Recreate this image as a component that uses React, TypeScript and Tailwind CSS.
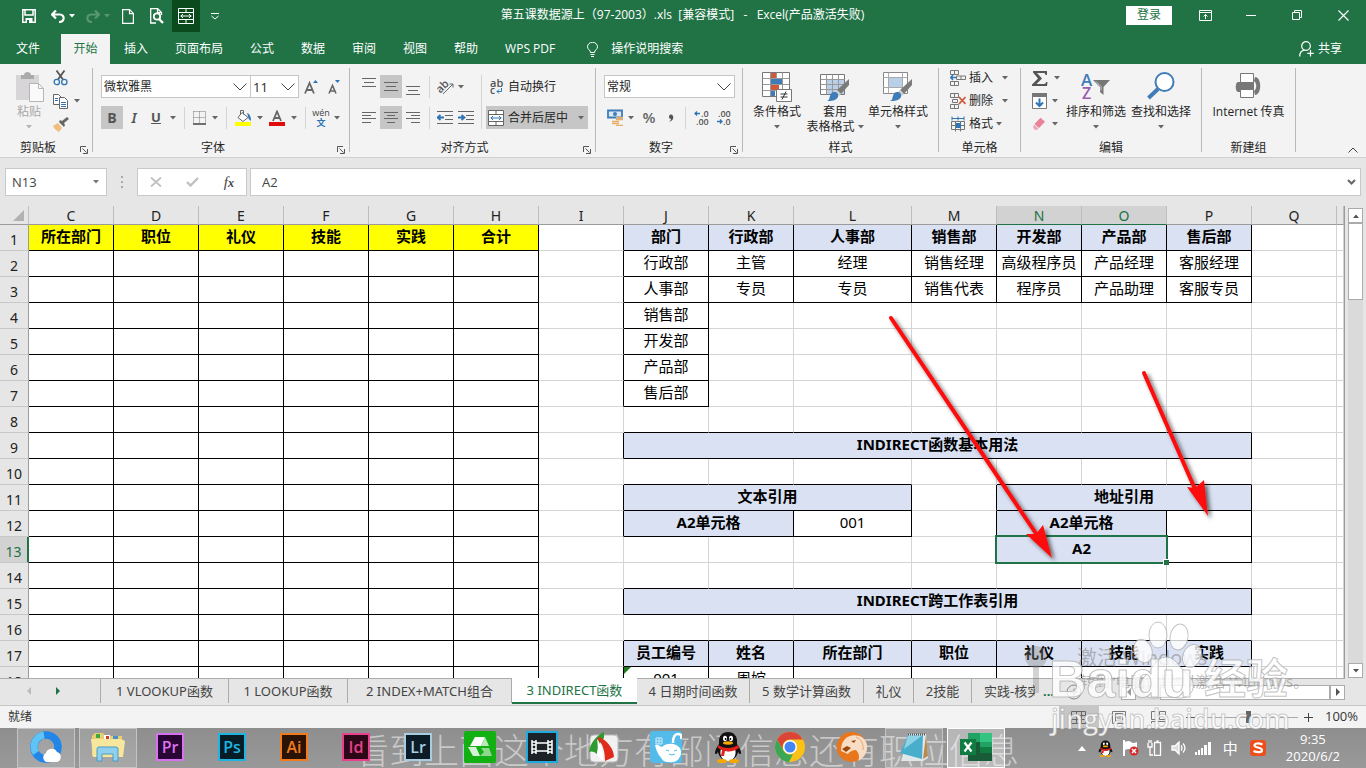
import React, { useState } from 'react';
import clsx from 'clsx';

const UI_FONT = "font-['Open_Sans','Noto_Sans_CJK_SC',sans-serif]";
const GRID_FONT = "font-['Noto_Sans','Noto_Sans_CJK_SC',sans-serif]";

/* ---------- small shared pieces ---------- */

const Caret = ({ className = 'text-[#666]' }: { className?: string }) => (
  <svg width="6" height="4" viewBox="0 0 6 4" className={clsx('shrink-0', className)} aria-hidden="true">
    <path d="M0 0h6L3 3.5z" fill="currentColor" />
  </svg>
);

const Chevron = () => (
  <svg width="14" height="8" viewBox="0 0 14 8" className="pointer-events-none absolute right-1 top-2" fill="none" stroke="#444" aria-hidden="true">
    <path d="M.5.5L7 7 13.5.5" />
  </svg>
);

const Divider = () => <span className="mx-[5px] h-[22px] w-px shrink-0 bg-[#d4d4d4]" />;

interface ToolProps {
  label: string;
  className?: string;
  active?: boolean;
  children: React.ReactNode;
}

function Tool({ label, className, active, children }: ToolProps) {
  return (
    <button
      aria-label={label}
      title={label}
      className={clsx('flex h-full shrink-0 items-center justify-center', active && 'bg-[#c6c6c6]', className)}
    >
      {children}
    </button>
  );
}

interface GroupProps {
  label: string;
  launcher?: boolean;
  className: string;
  children: React.ReactNode;
}

function Group({ label, launcher, className, children }: GroupProps) {
  return (
    <section className={clsx('flex shrink-0', className)} aria-label={label}>
      <div className="flex min-w-0 flex-1 flex-col">
        <div className="h-[72px]">{children}</div>
        <div className="flex h-[15px] items-center">
          <span className="flex-1 text-center leading-[15px]">{label}</span>
          {launcher && (
            <button className="flex w-4 justify-center pt-1" aria-label={`${label}设置`}>
              <svg width="8" height="8" viewBox="0 0 8 8" fill="none" stroke="#555">
                <path d="M.5 6V.5H6M2.5 2.5l4 4M7.5 3v4.5H3" />
              </svg>
            </button>
          )}
        </div>
      </div>
      <div className="h-[84px] w-px bg-[#b9b9b9]" />
    </section>
  );
}

interface BigToolProps {
  icon: React.ReactNode;
  lines: string[];
  className?: string;
  muted?: boolean;
  caret?: 'below' | 'inline' | 'none';
}

function BigTool({ icon, lines, className, muted, caret = 'below' }: BigToolProps) {
  return (
    <button className={clsx('flex shrink-0 flex-col items-center pt-1 leading-[15px]', muted && 'text-[#a8a8a8]', className)}>
      <span className="flex h-8 items-start">{icon}</span>
      {lines.map((line, i) => (
        <span key={line} className="flex items-center gap-[3px] whitespace-nowrap">
          {line}
          {caret === 'inline' && i === lines.length - 1 && <Caret />}
        </span>
      ))}
      {caret === 'below' && (
        <span className="flex h-[15px] items-center"><Caret className={muted ? 'text-[#b5b5b5]' : 'text-[#666]'} /></span>
      )}
    </button>
  );
}

/* ---------- icons ---------- */

const MergeIcon = ({ stroke, accent, fill = 'none' }: { stroke: string; accent: string; fill?: string }) => (
  <svg width="16" height="16" viewBox="0 0 16 16" fill={fill} stroke={stroke} aria-hidden="true">
    <path d="M.5.5h15v15H.5zM.5 4.500h15M.5 11.500h15M8 .5v4M8 11.500v4" />
    <path d="M2.500 8h11M5 6L3 8l2 2M11 6l2 2-2 2" stroke={accent} fill="none" />
  </svg>
);

const Lines = ({ rows }: { rows: [number, number, number][] }) => (
  <svg width="14" height="14" viewBox="0 0 14 14" stroke="#666" aria-hidden="true">
    {rows.map(([y, x1, x2]) => (
      <path key={y} d={`M${x1} ${y + 0.5}H${x2}`} />
    ))}
  </svg>
);

const IndentIcon = ({ right }: { right?: boolean }) => (
  <svg width="16" height="14" viewBox="0 0 16 14" fill="none" aria-hidden="true">
    <path d="M0 .5h16M8 4.500h8M8 8.500h8M0 12.500h16" stroke="#666" />
    <path d={right ? 'M0 6.500h6M3.500 4l3 2.500-3 2.500' : 'M1 6.500h6M3.500 4l-3 2.500 3 2.500'} stroke="#2f75b5" strokeWidth="1.800" />
  </svg>
);

const Brush = () => (
  <>
    <path d="M29 7v6l-8 9-4-4z" fill="#7b7b7b" />
    <path d="M17 18l4 4-2 2-4-4z" fill="#cfcfcf" />
    <path d="M14 20c3 0 5 2 4 5-2 4-7 4-11 4 3-1 2-3 3-5 1-3 2-4 4-4z" fill="#3f7cb8" />
  </>
);

const CondFormatIcon = () => (
  <svg width="30" height="30" viewBox="0 0 30 30" aria-hidden="true">
    <path d="M.5.5h27v24H.5z" fill="#fff" stroke="#777" />
    <path d="M8.500.5v24M14.500.5v24M20.500.5v24M.5 6.500h27M.5 12.500h27M.5 18.500h27" stroke="#999" />
    <path d="M9 1h5v5H9zM9 13h8v5H9z" fill="#d0593b" />
    <path d="M9 7h11v5H9zM9 19h4v5H9z" fill="#3f7cb8" />
    <path d="M14.500 17.500h15v12h-15z" fill="#fff" stroke="#777" />
    <path d="M18.500 22h7M18.500 25h7M24 19.500l-4 8" stroke="#333" fill="none" />
  </svg>
);

const TableFormatIcon = () => (
  <svg width="30" height="30" viewBox="0 0 30 30" aria-hidden="true">
    <path d="M.5 2.500h24v20H.5z" fill="#fff" stroke="#777" />
    <path d="M7 8h17v14H7z" fill="#b9cfe8" />
    <path d="M6.500 2.500v20M12.500 2.500v20M18.500 2.500v20M.5 7.500h24M.5 12.500h24M.5 17.500h24" stroke="#999" />
    <Brush />
  </svg>
);

const CellStyleIcon = () => (
  <svg width="30" height="30" viewBox="0 0 30 30" aria-hidden="true">
    <path d="M.5.5h24v21H.5z" fill="#fff" stroke="#888" />
    <path d="M5.500.5v21M19.500.5v21M.5 5.500h24M.5 15.500h24" stroke="#aaa" />
    <path d="M6 6h13v9H6z" fill="#b9cfe8" />
    <Brush />
  </svg>
);

const CellsIcon = ({ kind }: { kind: 'insert' | 'delete' | 'format' }) => (
  <svg width="16" height="16" viewBox="0 0 16 16" fill="none" stroke="#777" aria-hidden="true">
    {kind === 'format' ? (
      <>
        <path d="M1.500 5.500h13v8h-13zM5.500 5.500v10M10.500 5.500v10M1.500 9.500h13" />
        <path d="M6 7h5v5H6z" fill="#2f75b5" stroke="none" />
        <path d="M2 2.500h12M2 .5v4M14 .5v4M8 .5v4" stroke="#2f75b5" />
      </>
    ) : (
      <>
        <path d="M.5.5h8v4h-8zM4.500.5v4M.5 11.500h8v4h-8zM4.500 11.500v4" />
        {kind === 'insert' ? (
          <>
            <path d="M6.500 6h9v3.500h-9zM11 6v3.500" />
            <path d="M6 7.500H.8M3 5L.8 7.500 3 10" stroke="#2f75b5" strokeWidth="1.500" />
          </>
        ) : (
          <>
            <path d="M2.500 6.500h5v3h-5z" />
            <path d="M9 4l6.500 7M15.500 4L9 11" stroke="#d0593b" strokeWidth="1.800" />
          </>
        )}
      </>
    )}
  </svg>
);

const Penguin = ({ size }: { size: number }) => (
  <svg width={size} height={size} viewBox="0 0 32 32" aria-hidden="true">
    <path d="M16 1c6 0 9 4 9 9v3c2 3 4 6 4 9 0 2-2 1-3-1-1 5-5 9-10 9S7 26 6 21c-1 2-3 3-3 1 0-3 2-6 4-9v-3c0-5 3-9 9-9z" fill="#111" />
    <path d="M9 18c4 3 10 3 14 0 2 5-1 12-7 12S7 23 9 18z" fill="#fff" />
    <ellipse cx="13" cy="7.500" rx="2" ry="2.800" fill="#fff" />
    <ellipse cx="19" cy="7.500" rx="2" ry="2.800" fill="#fff" />
    <circle cx="13.600" cy="8" r=".9" />
    <circle cx="18.400" cy="8" r=".9" />
    <ellipse cx="16" cy="12" rx="5" ry="1.700" fill="#f7a800" />
    <path d="M6 14c6 4 14 4 20 0l1 3c-4 3-9 4-14 3l-1 5H9l1-6-4-2z" fill="#e3201b" />
    <ellipse cx="10" cy="30" rx="5" ry="2" fill="#f7a800" />
    <ellipse cx="22" cy="30" rx="5" ry="2" fill="#f7a800" />
  </svg>
);

/* ---------- title bar and tabs ---------- */

function TitleBar() {
  return (
    <header className="flex h-[34px] shrink-0 bg-[#217346] text-white">
      <div className="flex h-8 flex-1 basis-0 pl-[15px]">
        <Tool label="保存" className="w-7">
          <svg width="14" height="14" viewBox="0 0 14 14" fill="none" stroke="#fff" strokeWidth="1.500">
            <path d="M.8.8h12.400v12.400H.8zM3 1v5h8V1" />
            <path d="M3.500 9h7v5h-7z" fill="#fff" stroke="none" />
            <path d="M5 11h2v3H5z" fill="#217346" stroke="none" />
          </svg>
        </Tool>
        <Tool label="撤消" className="w-[35px] gap-1 pl-1">
          <svg width="14" height="13" viewBox="0 0 14 13" fill="none" stroke="#fff" strokeWidth="2.200">
            <path d="M1 4.500h8c5 0 5 7.500-1 7.500M5 .5l-4 4 4 4" />
          </svg>
          <Caret className="text-white" />
        </Tool>
        <Tool label="恢复" className="w-[35px] gap-1 pl-1 opacity-25">
          <svg width="14" height="13" viewBox="0 0 14 13" fill="none" stroke="#fff" strokeWidth="2.200">
            <path d="M13 4.500H5c-5 0-5 7.500 1 7.500M9 .5l4 4-4 4" />
          </svg>
          <Caret className="text-white" />
        </Tool>
        <Tool label="新建" className="w-[29px]">
          <svg width="12" height="15" viewBox="0 0 12 15" fill="none" stroke="#fff" strokeWidth="1.200">
            <path d="M.6.6h7l3.800 3.800v10H.6zM7.500.6v4h4" />
          </svg>
        </Tool>
        <Tool label="打印预览" className="w-[30px]">
          <svg width="14" height="16" viewBox="0 0 14 16" fill="none" stroke="#fff" strokeWidth="1.300">
            <path d="M6 15H.7V.7h7l3.800 3.800V7M7.500.7v4h4" />
            <circle cx="7" cy="8.500" r="3.200" strokeWidth="1.800" />
            <path d="M9 11l4 4" strokeWidth="2.400" />
          </svg>
        </Tool>
        <Tool label="合并后居中" className="w-7 bg-[#0a4a1d]">
          <MergeIcon stroke="#fff" accent="#fff" />
        </Tool>
        <Tool label="自定义快速访问工具栏" className="w-[30px]">
          <svg width="8" height="7" viewBox="0 0 8 7" fill="none" stroke="#fff">
            <path d="M0 .5h8M.5 3L4 6l3.500-3" />
          </svg>
        </Tool>
      </div>
      <h1 className="whitespace-pre pt-[7px] text-[12px] leading-4">
        {'第五课数据源上（97-2003）.xls  [兼容模式]   -   Excel(产品激活失败)'}
      </h1>
      <div className="flex h-[30px] flex-1 basis-0 items-center justify-end pl-4">
        <button className="mr-[10px] h-[19px] w-[46px] bg-white text-[12px] leading-[18px] text-[#217346]">登录</button>
        <Tool label="功能区显示选项" className="w-[46px]">
          <svg width="13" height="11" viewBox="0 0 13 11" fill="none" stroke="#fff">
            <path d="M.5.5h12v10H.5zM.5 2.500h12M6.500 9V4.500M4.500 6.500l2-2 2 2" />
          </svg>
        </Tool>
        <Tool label="最小化" className="w-[46px]">
          <svg width="10" height="1"><path d="M0 .5h10" stroke="#fff" /></svg>
        </Tool>
        <Tool label="向下还原" className="w-[46px]">
          <svg width="10" height="10" viewBox="0 0 10 10" fill="none" stroke="#fff">
            <path d="M.5 2.500h7v7h-7zM2.500 2.500v-2h7v7h-2" />
          </svg>
        </Tool>
        <Tool label="关闭" className="w-[46px]">
          <svg width="11" height="11" viewBox="0 0 11 11" stroke="#fff" strokeWidth="1.200"><path d="M.5.5l10 10M10.500.5l-10 10" /></svg>
        </Tool>
      </div>
    </header>
  );
}

const RIBBON_TABS = ['插入', '页面布局', '公式', '数据', '审阅', '视图', '帮助', 'WPS PDF'];

function RibbonTabs() {
  return (
    <nav className="flex h-[30px] shrink-0 gap-px bg-[#217346] text-[12px] text-white">
      <button className="w-[60px] pr-1">文件</button>
      <button className="w-[49px] bg-[#f3f3f3] text-[#217346]">开始</button>
      {RIBBON_TABS.map((tab) => (
        <button key={tab} className="whitespace-nowrap px-[13px]">{tab}</button>
      ))}
      <button className="flex items-center gap-[13px] pl-[18px]">
        <svg width="11" height="15" viewBox="0 0 11 15" fill="none" stroke="#fff">
          <path d="M3.500 10.500C3.500 8 .5 7.500.5 4.800a5 4.500 0 0110 0c0 2.700-3 3.200-3 5.700zM3.500 12.500h4M4 14.500h3" />
        </svg>
        操作说明搜索
      </button>
      <button className="ml-auto flex items-center gap-1 pr-6">
        <svg width="15" height="16" viewBox="0 0 15 16" fill="none" stroke="#fff" strokeWidth="1.200">
          <circle cx="7" cy="5" r="4.300" />
          <path d="M.7 15.500c0-3.500 2-6 5-6.300M11.500 9v6.500M8.300 12.300h6.500" />
        </svg>
        共享
      </button>
    </nav>
  );
}

/* ---------- ribbon ---------- */

function Ribbon() {
  return (
    <div className="relative flex h-[94px] shrink-0 border-b border-[#cfcfcf] bg-[#f3f3f3] pt-1 text-[12px] text-[#262626]">
      <Group label="剪贴板" launcher className="w-[93px]">
        <div className="flex pl-[13px]">
          <BigTool
            muted
            className="w-8"
            lines={['粘贴']}
            icon={
              <svg width="29" height="30" viewBox="0 0 29 30" aria-hidden="true">
                <path d="M1 3h23v25H1z" fill="#d8d5d8" />
                <path d="M6 3h3c0-4 7-4 7 0h3v4H6z" fill="#ababab" />
                <path d="M14.500 11.500h9l5 5v13h-14z" fill="#fafafa" stroke="#b5b5b5" />
                <path d="M23.500 11.500v5h5" fill="none" stroke="#b5b5b5" />
              </svg>
            }
          />
          <div className="ml-2 flex flex-col gap-[3px]">
            <button className="flex h-5 w-4 items-center" aria-label="剪切">
              <svg width="16" height="16" viewBox="0 0 16 16" fill="none">
                <path d="M3.500.5l6.500 9M11.500.5L5 9.500" stroke="#555" strokeWidth="1.800" />
                <circle cx="3.800" cy="12" r="2.700" stroke="#2f75b5" strokeWidth="1.300" />
                <circle cx="11.300" cy="12" r="2.700" stroke="#2f75b5" strokeWidth="1.300" />
              </svg>
            </button>
            <button className="flex h-5 items-center gap-[5px]" aria-label="复制">
              <svg width="16" height="15" viewBox="0 0 16 15" fill="#fff" stroke="#666">
                <path d="M.5.5h5l3 3v7h-8z" />
                <path d="M6.500 3.500h5l3 3v8h-8z" />
                <path d="M2 4.500h3M2 6.500h3M8 8.500h5M8 10.500h5M8 12.500h5" stroke="#2f75b5" />
              </svg>
              <Caret />
            </button>
            <button className="flex h-5 w-4 items-center" aria-label="格式刷">
              <svg width="16" height="15" viewBox="0 0 16 15">
                <path d="M0 9l5-3 4 5-3 4c-2-1-5-3-6-6z" fill="#efbe7d" />
                <path d="M6 5l5 5 1-2-1-2 5-4-2-2-5 4-2-1z" fill="#666" />
              </svg>
            </button>
          </div>
        </div>
      </Group>

      <Group label="字体" launcher className="w-[257px]">
        <div className="flex flex-col gap-2 pl-2 pt-[7px]">
          <div className="flex h-[23px]">
            <div className="relative">
              <select aria-label="字体" className="h-[23px] w-[150px] appearance-none border border-[#c6c6c6] bg-white pl-[2px] text-[12px] leading-[18px]">
                <option>微软雅黑</option>
              </select>
              <Chevron />
            </div>
            <div className="relative -ml-px">
              <select aria-label="字号" className="h-[23px] w-[49px] appearance-none border border-[#c6c6c6] bg-white pl-[2px] text-[13px] leading-[18px]">
                <option>11</option>
              </select>
              <Chevron />
            </div>
            <Tool label="增大字号" className="w-6">
              <svg width="15" height="16" viewBox="0 0 15 16" fill="none">
                <path d="M1 14.500L5.500 4 10 14.500M2.500 11h6" stroke="#666" strokeWidth="1.800" />
                <path d="M9 4l2.500-3L14 4z" fill="#2f75b5" />
              </svg>
            </Tool>
            <Tool label="减小字号" className="w-[22px]">
              <svg width="13" height="16" viewBox="0 0 13 16" fill="none">
                <path d="M1 14.500L4.500 6.500 8 14.500M2 12h5" stroke="#666" strokeWidth="1.600" />
                <path d="M7 1l2.500 3L12 1z" fill="#2f75b5" />
              </svg>
            </Tool>
          </div>
          <div className="flex h-[23px] items-center">
            <Tool label="加粗" active className="w-[22px] text-[14px] font-bold text-[#555]">B</Tool>
            <Tool label="倾斜" className="w-[22px] font-['Noto_Sans'] text-[14px] font-semibold italic text-[#555]">I</Tool>
            <Tool label="下划线" className="w-[22px] text-[13px] font-bold text-[#555] underline">U</Tool>
            <Tool label="下划线类型" className="w-[12px]"><Caret /></Tool>
            <Divider />
            <Tool label="边框" className="w-[18px]">
              <svg width="13" height="14" viewBox="0 0 13 14" fill="none" stroke="#777">
                <path d="M.5.5h12M.5 6.500h12M.5.5v12M6.500.5v12M12.500.5v12" strokeDasharray="1 1" />
                <path d="M0 13h13" stroke="#444" strokeWidth="1.500" />
              </svg>
            </Tool>
            <Tool label="边框类型" className="w-[13px]"><Caret /></Tool>
            <Divider />
            <Tool label="填充颜色" className="w-[22px]">
              <svg width="17" height="16" viewBox="0 0 17 16" fill="none">
                <path d="M7 2.500l6 5-5 4-5-4z" fill="#fff" stroke="#666" />
                <path d="M5.500 5V.5h3v4" stroke="#666" />
                <path d="M12 3c3 1 4 4 4 8-2-1-3-3-3-5z" fill="#2f75b5" />
                <path d="M0 12h16v4H0z" fill="#ff0" />
              </svg>
            </Tool>
            <Tool label="更多填充颜色" className="w-[12px]"><Caret /></Tool>
            <Tool label="字体颜色" className="w-[22px]">
              <svg width="16" height="16" viewBox="0 0 16 16" fill="none">
                <path d="M4 11L8 1.500 12 11M5.500 8h5" stroke="#666" strokeWidth="1.800" />
                <path d="M0 12h16v4H0z" fill="#e00b0b" />
              </svg>
            </Tool>
            <Tool label="更多字体颜色" className="w-[12px]"><Caret /></Tool>
            <Divider />
            <Tool label="拼音" className="w-5 flex-col text-[#444]">
              <span className="text-[9px] leading-[10px]">wén</span>
              <span className="text-[9px] font-bold leading-[10px] text-[#2f75b5]">文</span>
            </Tool>
            <Tool label="更多拼音选项" className="w-[12px]"><Caret /></Tool>
          </div>
        </div>
      </Group>

      <Group label="对齐方式" launcher className="w-[246px]">
        <div className="flex pl-2 pt-[7px]">
          <div className="flex flex-col gap-2">
            <div className="flex h-[23px] items-center">
              <Tool label="顶端对齐" className="w-[22px] pb-2"><Lines rows={[[2, 0, 14], [6, 2, 12], [10, 0, 14]]} /></Tool>
              <Tool label="垂直居中" active className="w-[22px]"><Lines rows={[[2, 0, 14], [6, 2, 12], [10, 0, 14]]} /></Tool>
              <Tool label="底端对齐" className="w-[22px] pt-2"><Lines rows={[[2, 0, 14], [6, 2, 12], [10, 0, 14]]} /></Tool>
              <Divider />
              <Tool label="方向" className="w-[30px] gap-[3px]">
                <svg width="18" height="17" viewBox="0 0 18 17">
                  <text x="0" y="12" transform="rotate(-45 6 10)" className="font-['Open_Sans']" fontSize="11" fontWeight="600" fill="#555">ab</text>
                  <path d="M6 16L16 6M12.500 6H16v3.500" fill="none" stroke="#666" />
                </svg>
                <Caret />
              </Tool>
            </div>
            <div className="flex h-[23px] items-center">
              <Tool label="左对齐" className="w-[22px]"><Lines rows={[[1, 0, 14], [4, 0, 9], [7, 0, 14], [11, 0, 9]]} /></Tool>
              <Tool label="居中" active className="w-[22px]"><Lines rows={[[1, 0, 14], [4, 3, 11], [7, 0, 14], [11, 3, 11]]} /></Tool>
              <Tool label="右对齐" className="w-[22px]"><Lines rows={[[1, 0, 14], [4, 5, 14], [7, 0, 14], [11, 5, 14]]} /></Tool>
              <Divider />
              <Tool label="减少缩进量" className="w-5"><IndentIcon /></Tool>
              <Tool label="增加缩进量" className="w-[22px]"><IndentIcon right /></Tool>
            </div>
          </div>
          <span className="ml-1 mr-1 h-[54px] w-px bg-[#d4d4d4]" />
          <div className="flex flex-col gap-2">
            <button className="flex h-[23px] items-center gap-1 pl-1">
              <svg width="14" height="16" viewBox="0 0 14 16">
                <text x="0" y="8" className="font-['Open_Sans']" fontSize="11" fontWeight="600" fill="#555">ab</text>
                <text x="0" y="15" className="font-['Open_Sans']" fontSize="10" fontWeight="600" fill="#555">c</text>
                <path d="M11.500 9v3.500H7M9 10.500l-2 2 2 2" fill="none" stroke="#2f75b5" />
              </svg>
              自动换行
            </button>
            <button className="flex h-[23px] w-[102px] items-center gap-1 bg-[#c6c6c6] pl-[2px]">
              <MergeIcon stroke="#666" accent="#2f75b5" fill="#fff" />
              合并后居中
              <span className="ml-auto pr-1"><Caret /></span>
            </button>
          </div>
        </div>
      </Group>

      <Group label="数字" launcher className="w-[147px]">
        <div className="flex flex-col gap-2 pl-2 pt-[7px]">
          <div className="relative w-[131px]">
            <select aria-label="数字格式" className="block h-[23px] w-full appearance-none border border-[#c6c6c6] bg-white pl-[2px] text-[12px] leading-[18px]">
              <option>常规</option>
            </select>
            <Chevron />
          </div>
          <div className="flex h-[23px] items-center">
            <Tool label="会计数字格式" className="w-[22px]">
              <svg width="17" height="17" viewBox="0 0 17 17" fill="none">
                <path d="M1 1.500h14v7H1z" fill="#dce8f4" stroke="#3f7cb8" strokeWidth="1.800" />
                <circle cx="8" cy="5" r="2" fill="#3f7cb8" />
                <path d="M9 8.500h7M9 10.500h7M5 12.500h7M5 14.500h7M9 16.500h7" stroke="#e9ad66" strokeWidth="1.300" />
              </svg>
            </Tool>
            <Tool label="货币类型" className="w-[10px]"><Caret /></Tool>
            <Tool label="百分比样式" className="w-[26px] text-[15px] font-semibold text-[#666]">%</Tool>
            <Tool label="千位分隔样式" className="w-[18px]">
              <svg width="6" height="8" viewBox="0 0 6 8"><path d="M1 3a2 2 0 014-1c1 3-1 5-4 6 1-1 2-2 2-3-1 0-2-1-2-2z" fill="#555" /></svg>
            </Tool>
            <Divider />
            <Tool label="增加小数位数" className="w-[22px]">
              <svg width="16" height="16" viewBox="0 0 16 16" fill="#555" className="font-['Open_Sans']">
                <path d="M6 3.500H1M3 1.500l-2 2 2 2" fill="none" stroke="#2f75b5" strokeWidth="1.300" />
                <text x="7" y="7" fontSize="9" fontWeight="600">.0</text>
                <text x="2" y="15" fontSize="9" fontWeight="600">.00</text>
              </svg>
            </Tool>
            <Tool label="减少小数位数" className="w-[22px]">
              <svg width="16" height="16" viewBox="0 0 16 16" fill="#555" className="font-['Open_Sans']">
                <text x="2" y="7" fontSize="9" fontWeight="600">.00</text>
                <path d="M1 11.500h5M4 9.500l2 2-2 2" fill="none" stroke="#2f75b5" strokeWidth="1.300" />
                <text x="7" y="15" fontSize="9" fontWeight="600">.0</text>
              </svg>
            </Tool>
          </div>
        </div>
      </Group>

      <Group label="样式" className="w-[196px]">
        <div className="flex pl-[5px]">
          <BigTool className="w-[58px]" lines={['条件格式']} icon={<CondFormatIcon />} />
          <BigTool className="w-[58px]" lines={['套用', '表格格式']} icon={<TableFormatIcon />} caret="inline" />
          <BigTool className="w-[68px]" lines={['单元格样式']} icon={<CellStyleIcon />} />
        </div>
      </Group>

      <Group label="单元格" className="w-[82px]">
        <div className="flex flex-col gap-[3px] pl-[11px]">
          <button className="flex h-5 items-center gap-[3px]"><CellsIcon kind="insert" />插入<span className="ml-[6px]"><Caret /></span></button>
          <button className="flex h-5 items-center gap-[3px]"><CellsIcon kind="delete" />删除<span className="ml-[6px]"><Caret /></span></button>
          <button className="flex h-5 items-center gap-[3px]"><CellsIcon kind="format" />格式<Caret /></button>
        </div>
      </Group>

      <Group label="编辑" className="w-[181px]">
        <div className="flex pl-[11px]">
          <div className="flex flex-col gap-[3px]">
            <button className="flex h-5 items-center gap-[6px]" aria-label="自动求和">
              <svg width="16" height="15" viewBox="0 0 16 15"><path d="M1 0h14v4h-1.500c0-1.500-1-2-2-2H5l5 5.500L4.500 13H12c1 0 2-1 2-2h1.500L15 15H0v-1.500l6-6L1 1.500z" fill="#555" /></svg>
              <Caret />
            </button>
            <button className="flex h-5 items-center gap-[5px]" aria-label="填充">
              <svg width="15" height="16" viewBox="0 0 15 16" fill="none">
                <path d="M.5.5h14v15H.5z" fill="#fff" stroke="#777" />
                <path d="M0 0h15v4H0z" fill="#777" />
                <path d="M7.500 5.500v7M4 9.500L7.500 13 11 9.500" stroke="#2f75b5" strokeWidth="2" />
              </svg>
              <Caret />
            </button>
            <button className="flex h-5 items-center gap-[5px]" aria-label="清除">
              <svg width="15" height="14" viewBox="0 0 15 14">
                <path d="M8.500.8l4.500 4L7 11 2.500 7z" fill="#e8839b" />
                <path d="M2 7.500L6.500 11.500 5 13H3L1 10.500z" fill="#f0a8b8" />
              </svg>
              <Caret />
            </button>
          </div>
          <BigTool
            className="ml-1 w-[64px]"
            lines={['排序和筛选']}
            icon={
              <svg width="30" height="30" viewBox="0 0 30 30" className="font-['Open_Sans']">
                <text x="0" y="14" fontSize="17" fontWeight="600" fill="#3f7cb8">A</text>
                <text x="1" y="27" fontSize="16" fontWeight="600" fill="#9a5bb0">Z</text>
                <path d="M12 8h17l-6.500 7v8L19 20v-5z" fill="#777" />
                <path d="M15 9.500l5 5v4" stroke="#ccc" fill="none" />
              </svg>
            }
          />
          <BigTool
            className="w-[66px]"
            lines={['查找和选择']}
            icon={
              <svg width="28" height="28" viewBox="0 0 28 28" fill="none" stroke="#3f7cb8">
                <circle cx="17.500" cy="10" r="9" fill="#fff" strokeWidth="2" />
                <path d="M11 17l-9.500 9" strokeWidth="4" />
              </svg>
            }
          />
        </div>
      </Group>

      <Group label="新建组" className="w-[94px]">
        <BigTool
          className="w-full"
          caret="none"
          lines={['Internet 传真']}
          icon={
            <svg width="27" height="27" viewBox="0 0 27 27">
              <path d="M3 10h16v10H3c-3 0-3-10 0-10z" fill="#777" />
              <path d="M20 5c7 0 7 18 0 18l-1-4c3-2 3-8 0-10z" fill="#777" />
              <path d="M5.500 1.500h13v9h-13zM5.500 17.500h13v8h-13z" fill="#fff" stroke="#777" />
            </svg>
          }
        />
      </Group>
      <button className="absolute bottom-[4px] right-2" aria-label="折叠功能区">
        <svg width="10" height="6" viewBox="0 0 10 6" fill="none" stroke="#444"><path d="M.5 5.500L5 1l4.500 4.500" /></svg>
      </button>
    </div>
  );
}

function FormulaBar() {
  return (
    <div className="flex h-12 shrink-0 items-center bg-[#e6e6e6] px-[5px] text-[13px] text-[#444]">
      <div className="flex h-7 w-[102px] items-center border border-[#c9c9c9] bg-white pr-[6px]">
        <input aria-label="名称框" defaultValue="N13" className="w-full min-w-0 bg-transparent pl-[6px] leading-5 outline-none" />
        <button aria-label="名称列表"><Caret className="w-2 text-[#777]" /></button>
      </div>
      <svg width="30" height="12" viewBox="0 0 30 12" fill="#aaa"><path d="M14 0h2v2h-2zM14 5h2v2h-2zM14 10h2v2h-2z" /></svg>
      <div className="flex h-7 w-[110px] items-center justify-between border border-[#c9c9c9] bg-white px-3">
        <button aria-label="取消">
          <svg width="12" height="10" viewBox="0 0 12 10" stroke="#c0c0c0" strokeWidth="1.800"><path d="M1 .5l10 9M11 .5l-10 9" /></svg>
        </button>
        <button aria-label="输入">
          <svg width="13" height="10" viewBox="0 0 13 10" fill="none" stroke="#c0c0c0" strokeWidth="2.400"><path d="M1 5l3.500 3.500L12 1" /></svg>
        </button>
        <button aria-label="插入函数" className="font-['Liberation_Serif',serif] text-[15px] italic leading-5">
          f<span className="text-[12px] font-bold">x</span>
        </button>
      </div>
      <div className="ml-[3px] flex h-7 flex-1 items-center border border-[#c9c9c9] bg-white pr-1">
        <input aria-label="编辑栏" defaultValue="A2" className="min-w-0 flex-1 bg-transparent pl-[11px] leading-5 outline-none" />
        <button aria-label="展开编辑栏">
          <svg width="9" height="6" viewBox="0 0 9 6" fill="none" stroke="#666" strokeWidth="2"><path d="M1 1l3.500 3.500L8 1" /></svg>
        </button>
      </div>
    </div>
  );
}

/* ---------- sheet ---------- */

const COLS = ['C', 'D', 'E', 'F', 'G', 'H', 'I', 'J', 'K', 'L', 'M', 'N', 'O', 'P', 'Q', ''];
const ROWS = Array.from({ length: 18 }, (_, i) => i + 1);

// ranges with black borders: first column, first row, last column, last row
const BOXED: [string, number, string, number][] = [
  ['C', 1, 'H', 18],
  ['J', 1, 'P', 3],
  ['J', 4, 'J', 7],
  ['J', 9, 'P', 9],
  ['J', 11, 'L', 12],
  ['N', 11, 'P', 13],
  ['J', 15, 'P', 15],
  ['J', 17, 'P', 18],
];

interface Cell {
  text: string;
  span?: number;
  tone?: 'yellow' | 'blue';
}

const CELLS: Record<string, Cell> = {
  J9: { text: 'INDIRECT函数基本用法', span: 7, tone: 'blue' },
  J11: { text: '文本引用', span: 3, tone: 'blue' },
  N11: { text: '地址引用', span: 3, tone: 'blue' },
  J12: { text: 'A2单元格', span: 2, tone: 'blue' },
  L12: { text: '001' },
  N12: { text: 'A2单元格', span: 2, tone: 'blue' },
  N13: { text: 'A2', span: 2, tone: 'blue' },
  J15: { text: 'INDIRECT跨工作表引用', span: 7, tone: 'blue' },
  J18: { text: '001' },
  K18: { text: '周婠' },
};

const fillRow = (start: string, row: number, texts: string[], tone?: Cell['tone']) => {
  texts.forEach((text, i) => {
    CELLS[`${COLS[COLS.indexOf(start) + i]}${row}`] = { text, tone };
  });
};

fillRow('C', 1, ['所在部门', '职位', '礼仪', '技能', '实践', '合计'], 'yellow');
fillRow('J', 1, ['部门', '行政部', '人事部', '销售部', '开发部', '产品部', '售后部'], 'blue');
fillRow('J', 2, ['行政部', '主管', '经理', '销售经理', '高级程序员', '产品经理', '客服经理']);
fillRow('J', 3, ['人事部', '专员', '专员', '销售代表', '程序员', '产品助理', '客服专员']);
['销售部', '开发部', '产品部', '售后部'].forEach((text, i) => fillRow('J', 4 + i, [text]));
fillRow('J', 17, ['员工编号', '姓名', '所在部门', '职位', '礼仪', '技能', '实践'], 'blue');

const isBoxed = (col: number, row: number) =>
  BOXED.some(([c1, r1, c2, r2]) => col >= COLS.indexOf(c1) && col <= COLS.indexOf(c2) && row >= r1 && row <= r2);

function SheetRow({ row }: { row: number }) {
  const cells: React.ReactNode[] = [];
  for (let col = 0; col < COLS.length; col++) {
    const id = `${COLS[col]}${row}`;
    const cell = CELLS[id];
    const last = col + (cell?.span ?? 1) - 1;
    cells.push(
      <td
        key={id}
        colSpan={cell?.span}
        className={clsx(
          'relative whitespace-nowrap border-b border-r p-0 text-center align-top leading-[23px]',
          isBoxed(last, row) || isBoxed(last + 1, row) ? 'border-r-black' : 'border-r-[#d4d4d4]',
          isBoxed(col, row) || isBoxed(col, row + 1) ? 'border-b-black' : 'border-b-[#d4d4d4]',
          cell?.tone && 'font-bold',
          cell?.tone === 'yellow' && 'bg-[#ffff00]',
          cell?.tone === 'blue' && 'bg-[#d9e1f2]'
        )}
      >
        {cell?.text}
        {id === 'N13' && (
          <span className="absolute -inset-[2px] z-10 border-2 border-[#217346]">
            <span className="absolute -bottom-[3px] -right-[3px] size-[6px] border-l border-t border-white bg-[#217346]" />
          </span>
        )}
        {id === 'J18' && (
          <svg width="7" height="7" className="absolute left-0 top-0"><path d="M0 0h7L0 7z" fill="#1e7b1e" /></svg>
        )}
      </td>
    );
    col = last;
  }
  return (
    <tr className="h-[26px]">
      <th
        scope="row"
        className={clsx(
          'border-b border-b-[#c8c8c8] p-0 pt-[5px] text-center text-[14px] font-normal leading-5',
          row === 13
            ? 'border-r-2 border-r-[#217346] bg-[#d2d2d2] text-[#217346]'
            : 'border-r border-r-[#9b9b9b] bg-[#e6e6e6] text-[#222]'
        )}
      >
        {row}
      </th>
      {cells}
    </tr>
  );
}

function Sheet() {
  return (
    <main className="flex min-h-0 flex-1 bg-[#e6e6e6]">
      <div className="relative min-w-0 flex-1 overflow-hidden border-r border-[#9b9b9b]">
        <table className={clsx('w-full table-fixed border-separate border-spacing-0 bg-white text-[15px] text-black', GRID_FONT)}>
          <colgroup>
            <col className="w-[29px]" />
            {COLS.map((c) => (
              <col key={c} className={c === 'L' ? 'w-[118px]' : c ? 'w-[85px]' : 'w-auto'} />
            ))}
          </colgroup>
          <thead className="bg-[#e6e6e6]">
            <tr className="h-[19px]">
              <th className="border-b border-r border-b-[#9b9b9b] border-r-[#c0c0c0] p-0 leading-[18px]">
                <svg width="11" height="11" className="ml-auto mr-1"><path d="M11 0v11H0z" fill="#b2b2b2" /></svg>
              </th>
              {COLS.map((c) => (
                <th
                  key={c}
                  scope="col"
                  className={clsx(
                    'border-b border-r border-r-[#bdbdbd] p-0 pt-px text-center text-[14px] font-normal leading-[17px]',
                    c === 'N' || c === 'O' ? 'border-b-[#217346] bg-[#d2d2d2] text-[#217346]' : 'border-b-[#9b9b9b] text-[#222]'
                  )}
                >
                  {c}
                </th>
              ))}
            </tr>
          </thead>
          <tbody>
            {ROWS.map((row) => (
              <SheetRow key={row} row={row} />
            ))}
          </tbody>
        </table>
        <svg width="1344" height="472" viewBox="0 0 1344 472" className="pointer-events-none absolute left-0 top-0 z-20">
          <defs>
            <filter id="arrow-shadow" x="-20%" y="-20%" width="150%" height="150%">
              <feDropShadow dx="3" dy="3" stdDeviation="2" floodColor="#000" floodOpacity="0.6" />
            </filter>
          </defs>
          <g fill="#fb0d0d" stroke="#fb0d0d" strokeLinecap="round" filter="url(#arrow-shadow)">
            <path d="M891 112L1037 329M1144 167L1195 283" strokeWidth="4" />
            <path d="M1052 352l-26-24 10 0 7-9zM1208 310l-21-29 8 1 9-8z" stroke="none" />
          </g>
        </svg>
      </div>
      <div className="flex w-[21px] shrink-0 flex-col items-center pt-[2px]">
        <button aria-label="向上滚动" className="flex h-[15px] w-[15px] items-center justify-center border border-[#ababab] bg-white">
          <Caret className="rotate-180 text-[#555]" />
        </button>
        <div className="w-[15px] flex-1 bg-[#dadada]">
          <div className="h-[77px] border border-[#ababab] bg-white" />
        </div>
        <button aria-label="向下滚动" className="flex h-[15px] w-[15px] items-center justify-center border border-[#ababab] bg-white">
          <Caret className="text-[#555]" />
        </button>
      </div>
    </main>
  );
}

const SHEET_TABS = [
  { name: '1 VLOOKUP函数', width: 'w-[128px]' },
  { name: '1 LOOKUP函数', width: 'w-[119px]' },
  { name: '2 INDEX+MATCH组合', width: 'w-[164px]' },
  { name: '3 INDIRECT函数', width: 'w-[125px]' },
  { name: '4 日期时间函数', width: 'w-[113px]' },
  { name: '5 数学计算函数', width: 'w-[114px]' },
  { name: '礼仪', width: 'w-[50px]' },
  { name: '2技能', width: 'w-[58px]' },
];

function SheetTabs() {
  const [active, setActive] = useState('3 INDIRECT函数');
  return (
    <div className={clsx('flex h-7 shrink-0 items-start border-b border-[#c6c6c6] bg-[#e6e6e6] text-[13px] text-[#444]', GRID_FONT)}>
      <div className="flex h-full flex-1 border-t border-[#ababab]">
        <div className="flex h-6 w-[101px] shrink-0 items-center border-r border-[#ababab] pl-[27px]">
          <button aria-label="上一张工作表"><svg width="4" height="8"><path d="M4 0v8L0 4z" fill="#bbb" /></svg></button>
          <button aria-label="下一张工作表" className="ml-[25px]"><svg width="4" height="8"><path d="M0 0v8l4-4z" fill="#217346" /></svg></button>
        </div>
        {SHEET_TABS.map(({ name, width }) => (
          <button
            key={name}
            onClick={() => setActive(name)}
            className={clsx(
              'shrink-0 whitespace-nowrap leading-5',
              width,
              name === active
                ? '-mt-px h-[26px] border-b-2 border-[#217346] bg-white text-[#217346]'
                : 'h-6 border-r border-[#ababab] pb-px'
            )}
          >
            {name}
          </button>
        ))}
        <button className="h-6 w-[63px] overflow-hidden whitespace-nowrap pb-px pl-3 text-left leading-5">实践-核实</button>
        <button className="ml-2 h-6 pb-px font-bold leading-5 text-[#217346]">...</button>
        <button aria-label="新工作表" className="ml-3 flex h-[25px] items-center">
          <svg width="16" height="16" viewBox="0 0 16 16" fill="none" stroke="#888"><circle cx="8" cy="8" r="7" /><path d="M8 4.500v7M4.500 8h7" /></svg>
        </button>
      </div>
      <div className="mr-[21px] flex h-[27px] w-[224px] items-center border-t border-[#ababab]">
        <button aria-label="向左滚动" className="flex h-[15px] w-[15px] items-center justify-center border border-[#ababab] bg-white">
          <svg width="4" height="8"><path d="M4 0v8L0 4z" fill="#999" /></svg>
        </button>
        <div className="h-[15px] flex-1 bg-[#dadada] pl-6"><div className="h-full border border-[#ababab] bg-white" /></div>
        <button aria-label="向右滚动" className="flex h-[15px] w-[15px] items-center justify-center border border-[#ababab] bg-white">
          <svg width="4" height="8"><path d="M0 0v8l4-4z" fill="#555" /></svg>
        </button>
      </div>
    </div>
  );
}

function StatusBar() {
  return (
    <div className="flex h-[22px] shrink-0 items-center bg-[#f3f3f3] pl-2 pr-2 text-[12px] text-[#333]">
      <span>就绪</span>
      <div className="ml-auto flex h-full items-center">
        <Tool label="普通" active className="w-10">
          <svg width="15" height="13" viewBox="0 0 15 13" fill="none" stroke="#666"><path d="M.5.5h14v12H.5zM5.500.5v12M10.500.5v12M.5 4.500h14M.5 8.500h14" /></svg>
        </Tool>
        <Tool label="页面布局" className="w-10">
          <svg width="14" height="13" viewBox="0 0 14 13" fill="none" stroke="#777"><path d="M.5.5h13v12H.5zM3.500 2.500h7v8h-7zM5 5h4M5 7h4" /></svg>
        </Tool>
        <Tool label="分页预览" className="w-10">
          <svg width="15" height="13" viewBox="0 0 15 13" fill="none" stroke="#777"><path d="M.5.5h5v8h-5zM8.500.5h6v8h-6zM.5 12.500v-2h14v2" /></svg>
        </Tool>
        <Tool label="缩小" className="ml-1 w-[15px]">
          <svg width="9" height="9" stroke="#555"><path d="M0 4.500h9" /></svg>
        </Tool>
        <div className="relative mx-1 flex h-3 w-[96px] items-center">
          <input type="range" aria-label="显示比例" min="10" max="190" defaultValue="100" className="absolute inset-0 w-full opacity-0" />
          <span className="h-px w-full bg-[#aaa]" />
          <span className="absolute left-[44px] h-3 w-[5px] bg-[#666]" />
        </div>
        <Tool label="放大" className="mr-[9px] w-[14px]">
          <svg width="9" height="9" stroke="#444"><path d="M0 4.500h9M4.500 0v9" /></svg>
        </Tool>
        <span className="text-[13px]">100%</span>
      </div>
    </div>
  );
}

/* ---------- windows taskbar ---------- */

function AdobeIcon({ text, className }: { text: string; className: string }) {
  return (
    <span className={clsx("flex size-7 items-center justify-center border-2 font-['Open_Sans'] text-[16px] font-semibold leading-5", className)}>
      {text}
    </span>
  );
}

const TASKS: { name: string; open?: boolean; icon: React.ReactNode }[] = [
  {
    name: 'QQ浏览器',
    open: true,
    icon: (
      <svg width="33" height="32" viewBox="0 0 33 32">
        <circle cx="16" cy="16" r="12" fill="none" stroke="#2186e8" strokeWidth="7.500" />
        <path d="M6 22A12 12 0 014 15a12 12 0 0110-11" fill="none" stroke="#5fc4f5" strokeWidth="7" />
        <path d="M16 31a5 5 0 010-9 6 6 0 0111-1 5.200 5.200 0 010 10z" fill="#fff" />
      </svg>
    ),
  },
  {
    name: '文件资源管理器',
    open: true,
    icon: (
      <svg width="34" height="30" viewBox="0 0 34 30">
        <path d="M1 4l3-3h8l2 3h17v20H1z" fill="#e8cf6d" />
        <path d="M5 2h4v4H5z" fill="#3da746" />
        <path d="M13 3h6v4h-6z" fill="#fff" />
        <path d="M15 4h3v3h-3z" fill="#d03c30" />
        <path d="M22 4h5v4h-5z" fill="#4c8fd0" />
        <path d="M0 7h30l4 2-2 16H2z" fill="#f7e79d" />
        <path d="M6 29V17q0-2 2-2h17q2 0 2 2v12h-5v-7H11v7z" fill="#8fd0ee" stroke="#4c9cc4" />
      </svg>
    ),
  },
  { name: 'Premiere', icon: <AdobeIcon text="Pr" className="border-[#d873f0] bg-[#2a0634] text-[#d873f0]" /> },
  { name: 'Photoshop', icon: <AdobeIcon text="Ps" className="border-[#1fb5e0] bg-[#061d28] text-[#1fb5e0]" /> },
  { name: 'Illustrator', icon: <AdobeIcon text="Ai" className="border-[#f07a1e] bg-[#2a1304] text-[#f07a1e]" /> },
  { name: 'InDesign', icon: <AdobeIcon text="Id" className="border-[#e8408a] bg-[#2c0717] text-[#e8408a]" /> },
  { name: 'Lightroom', icon: <AdobeIcon text="Lr" className="border-[#a8cce0] bg-[#0c1c26] text-[#a8cce0]" /> },
  {
    name: '笔记',
    icon: (
      <svg width="32" height="32" viewBox="0 0 32 32">
        <rect width="32" height="32" rx="2" fill="#12b012" />
        <path d="M11 6h10l-4 9h-6l-5 0z" fill="#fff" />
        <path d="M4 16h8l4 9h-7z" fill="#d6f2d6" />
        <path d="M21 6l4 9h-8z" fill="#b9e8b9" />
        <path d="M17 17h8l3 8H16l4-4z" fill="#8fd78f" />
      </svg>
    ),
  },
  {
    name: '视频编辑',
    icon: (
      <svg width="32" height="32" viewBox="0 0 32 32">
        <path d="M1 1h30v30H1z" fill="#1c2328" stroke="#20a9dc" strokeWidth="2" />
        <path d="M6 9v14M10 9v14M22 9v14M26 9v14M6 11h4M6 14h4M6 18h4M6 21h4M22 11h4M22 14h4M22 18h4M22 21h4M10 12h12M10 20h12" stroke="#fff" strokeWidth="1.500" />
      </svg>
    ),
  },
  {
    name: 'FastStone',
    icon: (
      <svg width="32" height="32" viewBox="0 0 32 32">
        <rect x="2" y="4" width="28" height="27" rx="4" fill="#f1f1f1" stroke="#bbb" />
        <path d="M16 1C9 4 2 12 1 21c2-1 5-1 8 2 1-8 4-13 7-16z" fill="#2f9a2f" />
        <path d="M11 6c8 3 15 12 15 20l-9 4C17 21 15 12 9 8z" fill="#e02b1c" />
        <path d="M9 8c4 5 6 12 6 21-3-1-5-3-6-6 1-5 1-9 0-15z" fill="#fff" />
      </svg>
    ),
  },
  {
    name: '哔哩',
    icon: (
      <svg width="32" height="32" viewBox="0 0 32 32">
        <rect width="32" height="32" rx="3" fill="#52bbea" />
        <path d="M6 7h6v6H6zM9 7v6M6 10h6" fill="none" stroke="#cfeefb" />
        <path d="M23 12c0-5 1-9 5-9 4 0 4 4 2 4" fill="none" stroke="#fff" strokeWidth="2.500" />
        <path d="M5 14c3-1 5 2 7 2 5-5 14-4 18 1 2 4 1 8-1 10-1 5-15 6-17 1-2-3-5-5-7-14z" fill="#fff" />
        <path d="M16 19l3 1M27 19l-3 1M19 23l3 1 3-1" stroke="#52bbea" fill="none" />
      </svg>
    ),
  },
  { name: 'QQ', icon: <Penguin size={32} /> },
  {
    name: 'Chrome',
    icon: (
      <svg width="30" height="30" viewBox="0 0 30 30">
        <circle cx="15" cy="15" r="15" fill="#fbc116" />
        <path d="M2 7.500a15 15 0 0126 0H15a7.500 7.500 0 00-6.500 11.200z" fill="#db4437" />
        <path d="M2 7.500l6.500 11.200A7.500 7.500 0 0018 22l-4 8A15 15 0 012 7.500z" fill="#3aa757" />
        <circle cx="15" cy="15" r="7" fill="#fff" />
        <circle cx="15" cy="15" r="5.500" fill="#4285f4" />
      </svg>
    ),
  },
  {
    name: '猎豹浏览器',
    icon: (
      <svg width="32" height="32" viewBox="0 0 32 32">
        <circle cx="15.500" cy="16" r="15" fill="#e8761d" />
        <path d="M9 8c6-6 20-5 22 6 1 7-3 13-9 16 2-4 1-8-2-11-3 0-6 1-8 4l-7-3c0-5 1-9 4-12z" fill="#f8dcc3" />
        <path d="M6 18l5-3 4 2-5 4zM15 10l5-1-2 3z" fill="#a2470c" />
        <path d="M20 6c5 2 8 7 7 13" fill="none" stroke="#e0a77c" />
      </svg>
    ),
  },
  {
    name: '记事本',
    open: true,
    icon: (
      <svg width="30" height="30" viewBox="0 0 30 30">
        <path d="M10 2h17l2 24-5 3H2z" fill="#dfe7ea" />
        <path d="M27 3l2 21-5 3z" fill="#b98a4d" />
        <path d="M9 3h15l-1 24L1 21z" fill="#49aecb" />
        <path d="M9 3h15L5 17z" fill="#8fd3e4" />
        <path d="M9 2.500h17" stroke="#555" strokeWidth="2" strokeDasharray="1 1" />
      </svg>
    ),
  },
  {
    name: 'Excel',
    open: true,
    icon: (
      <svg width="32" height="28" viewBox="0 0 32 28">
        <path d="M8 0h12v14H8z" fill="#21a366" />
        <path d="M20 0h12v9H20z" fill="#33c481" />
        <path d="M20 9h12v9H20z" fill="#21a366" />
        <path d="M8 9h12v19H8z" fill="#185c37" />
        <path d="M20 18h12v10H20z" fill="#185c37" />
        <path d="M20 14h12v6H20z" fill="#107c41" />
        <path d="M0 6h16v16H0z" fill="#107c41" />
        <path d="M4.500 9.500l7 9M11.500 9.500l-7 9" stroke="#fff" strokeWidth="2.200" />
      </svg>
    ),
  },
];

function Taskbar() {
  return (
    <footer className="relative flex h-10 shrink-0 overflow-hidden bg-linear-to-b from-[#8e8e8e] to-[#999] text-white">
      <p className="absolute left-[354px] top-px whitespace-nowrap text-[35px] font-light leading-[44px] text-white/50">
        看到上面这个地方有部门信息还有职位信息
      </p>
      <div className="relative flex gap-1 pl-[17px]">
        {TASKS.map(({ name, open, icon }) => (
          <button
            key={name}
            aria-label={name}
            className={clsx(
              'flex h-10 w-[58px] items-center justify-center pb-[2px]',
              open && 'border border-[#c4c4c4] bg-white/15',
              name === 'Excel' && 'border-white bg-white/35'
            )}
          >
            {icon}
          </button>
        ))}
      </div>
      <div className="relative ml-auto flex items-center pr-[26px]">
        <button aria-label="显示隐藏的图标" className="mr-[11px]"><svg width="8" height="5"><path d="M0 5l4-5 4 5z" fill="#fff" /></svg></button>
        <Penguin size={17} />
        <svg width="17" height="16" viewBox="0 0 17 16" className="ml-2">
          <path d="M1 0h2v16H1zM3 2q4-2 6 0t6 0v8q-4 2-6 0t-6 0z" fill="#fff" />
          <circle cx="12" cy="11" r="4.500" fill="#d42a2a" />
          <path d="M10 9l4 4M14 9l-4 4" stroke="#fff" strokeWidth="1.500" />
        </svg>
        <svg width="15" height="16" viewBox="0 0 15 16" fill="none" stroke="#fff" strokeWidth="1.300" className="ml-2">
          <path d="M7.500 2.500h6v13h-6zM9.500 1h2" />
          <path d="M1 3v4h4V3M2 0v3M4 0v3M3 7v8h3" />
        </svg>
        <svg width="16" height="14" viewBox="0 0 16 14" fill="none" stroke="#fff" strokeWidth="1.300" className="ml-[9px]">
          <path d="M1 5h3l4-4v12L4 9H1z" fill="#ddd" />
          <path d="M10 4.500q2 2.500 0 5M12 2.500q4 4.500 0 9" />
        </svg>
        <svg width="16" height="13" viewBox="0 0 16 13" fill="#fff" className="ml-2">
          <path d="M0 10h2v3H0zM3 8h2v5H3zM6 6h2v7H6zM9 3h3v10H9zM13 0h3v13h-3z" />
        </svg>
        <span className="ml-3 text-[15px] leading-5">中</span>
        <svg width="16" height="16" viewBox="0 0 16 16" className="ml-3">
          <rect width="16" height="16" rx="3" fill="#ec4f1c" />
          <path d="M12.500 4.500C9 3 4.500 3 4.500 5.500s7.500 1.500 7.500 4.500-5 2.500-8.500 1" fill="none" stroke="#fff" strokeWidth="2.200" />
        </svg>
        <div className="ml-5 text-center text-[13px] leading-[17px]">
          <div>9:35</div>
          <div>2020/6/2</div>
        </div>
      </div>
    </footer>
  );
}

function Watermark() {
  return (
    <svg
      width="350"
      height="160"
      viewBox="1016 608 350 160"
      className="pointer-events-none absolute bottom-0 right-0 z-30 font-['Open_Sans','Noto_Sans_CJK_SC',sans-serif]"
    >
      <g fill="#808080" fillOpacity=".55">
        <circle cx="1036" cy="657" r="11" fillOpacity=".35" />
        <path d="M1033 665h6v28h-6z" fillOpacity=".35" />
        <text x="1077" y="665" fontSize="20">激活 Windows</text>
        <text x="1080" y="687" fontSize="15">转到“电脑设置”以激活 Windows。</text>
      </g>
      <g fill="#fff" fillOpacity=".78" stroke="#a8a8a8" strokeOpacity=".7" strokeLinejoin="round">
        <ellipse cx="1158" cy="635" rx="9" ry="13" />
        <ellipse cx="1179" cy="637" rx="9" ry="13" transform="rotate(10 1179 637)" />
        <ellipse cx="1143" cy="651" rx="9" ry="12" transform="rotate(-20 1143 651)" />
        <ellipse cx="1192" cy="656" rx="9" ry="12" transform="rotate(25 1192 656)" />
        <path d="M1166 657c10 0 14 12 23 19 9 9 3 23-10 22-8-1-16-1-24 0-13 1-19-13-10-22 9-7 11-19 21-19z" />
        <text x="1049" y="697" fontSize="52" fontWeight="700" className="font-['Liberation_Sans']">Baidu</text>
        <text x="1204" y="694" fontSize="42" fontWeight="700">经验</text>
      </g>
      <text x="1051" y="729" fontSize="27" fontWeight="600" fill="#fff" fillOpacity=".9" stroke="#999" strokeOpacity=".5" className="font-['Open_Sans']">
        jingyan.baidu.com
      </text>
    </svg>
  );
}

export default function App() {
  return (
    <div className={clsx('relative flex h-screen flex-col overflow-hidden', UI_FONT)}>
      <TitleBar />
      <RibbonTabs />
      <Ribbon />
      <FormulaBar />
      <Sheet />
      <SheetTabs />
      <StatusBar />
      <Taskbar />
      <Watermark />
    </div>
  );
}
